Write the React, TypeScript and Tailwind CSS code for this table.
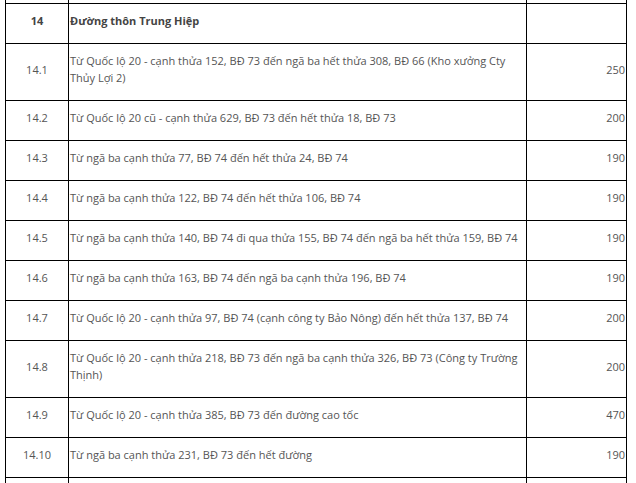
const rows = [
  { no: "14.1", text: "Từ Quốc lộ 20 - cạnh thửa 152, BĐ 73 đến ngã ba hết thửa 308, BĐ 66 (Kho xưởng Cty Thủy Lợi 2)", price: "250" },
  { no: "14.2", text: "Từ Quốc lộ 20 cũ - cạnh thửa 629, BĐ 73 đến hết thửa 18, BĐ 73", price: "200" },
  { no: "14.3", text: "Từ ngã ba cạnh thửa 77, BĐ 74 đến hết thửa 24, BĐ 74", price: "190" },
  { no: "14.4", text: "Từ ngã ba cạnh thửa 122, BĐ 74 đến hết thửa 106, BĐ 74", price: "190" },
  { no: "14.5", text: "Từ ngã ba cạnh thửa 140, BĐ 74 đi qua thửa 155, BĐ 74 đến ngã ba hết thửa 159, BĐ 74", price: "190" },
  { no: "14.6", text: "Từ ngã ba cạnh thửa 163, BĐ 74 đến ngã ba cạnh thửa 196, BĐ 74", price: "190" },
  { no: "14.7", text: "Từ Quốc lộ 20 - cạnh thửa 97, BĐ 74 (cạnh công ty Bảo Nông) đến hết thửa 137, BĐ 74", price: "200" },
  { no: "14.8", text: "Từ Quốc lộ 20 - cạnh thửa 218, BĐ 73 đến ngã ba cạnh thửa 326, BĐ 73 (Công ty Trường Thịnh)", price: "200" },
  { no: "14.9", text: "Từ Quốc lộ 20 - cạnh thửa 385, BĐ 73 đến đường cao tốc", price: "470" },
  { no: "14.10", text: "Từ ngã ba cạnh thửa 231, BĐ 73 đến hết đường", price: "190" },
];

const cell = "border border-black pt-2 pb-[14px] align-middle";

export default function App() {
  return (
    <div className="h-[483px] overflow-hidden bg-white">
      <div className="-mt-px pl-[5px]">
        <table
          className="w-[621px] table-fixed border-collapse text-[11px] leading-[17px] text-[#555]"
          style={{ fontFamily: '"Open Sans", "Noto Sans", sans-serif' }}
        >
          <colgroup>
            <col className="w-[63px]" />
            <col className="w-[458px]" />
            <col className="w-[100px]" />
          </colgroup>
          <tbody>
            {/* tail of the previous row, cut off at the top */}
            <tr className="h-[4px]">
              <td className="border border-black p-0" />
              <td className="border border-black p-0" />
              <td className="border border-black p-0" />
            </tr>
            <tr className="font-bold text-[#444]">
              <td className={`${cell} text-center`}>14</td>
              <td className={`${cell} pl-px`}>Đường thôn Trung Hiệp</td>
              <td className={cell} />
            </tr>
            {rows.map((r) => (
              <tr key={r.no}>
                <td className={`${cell} text-center`}>{r.no}</td>
                <td className={`${cell} pl-px pr-0`}>{r.text}</td>
                <td className={`${cell} pr-px text-right`}>{r.price}</td>
              </tr>
            ))}
            {/* start of the next row, cut off at the bottom */}
            <tr className="h-[30px]">
              <td className="border border-black p-0" />
              <td className="border border-black p-0" />
              <td className="border border-black p-0" />
            </tr>
          </tbody>
        </table>
      </div>
    </div>
  );
}
